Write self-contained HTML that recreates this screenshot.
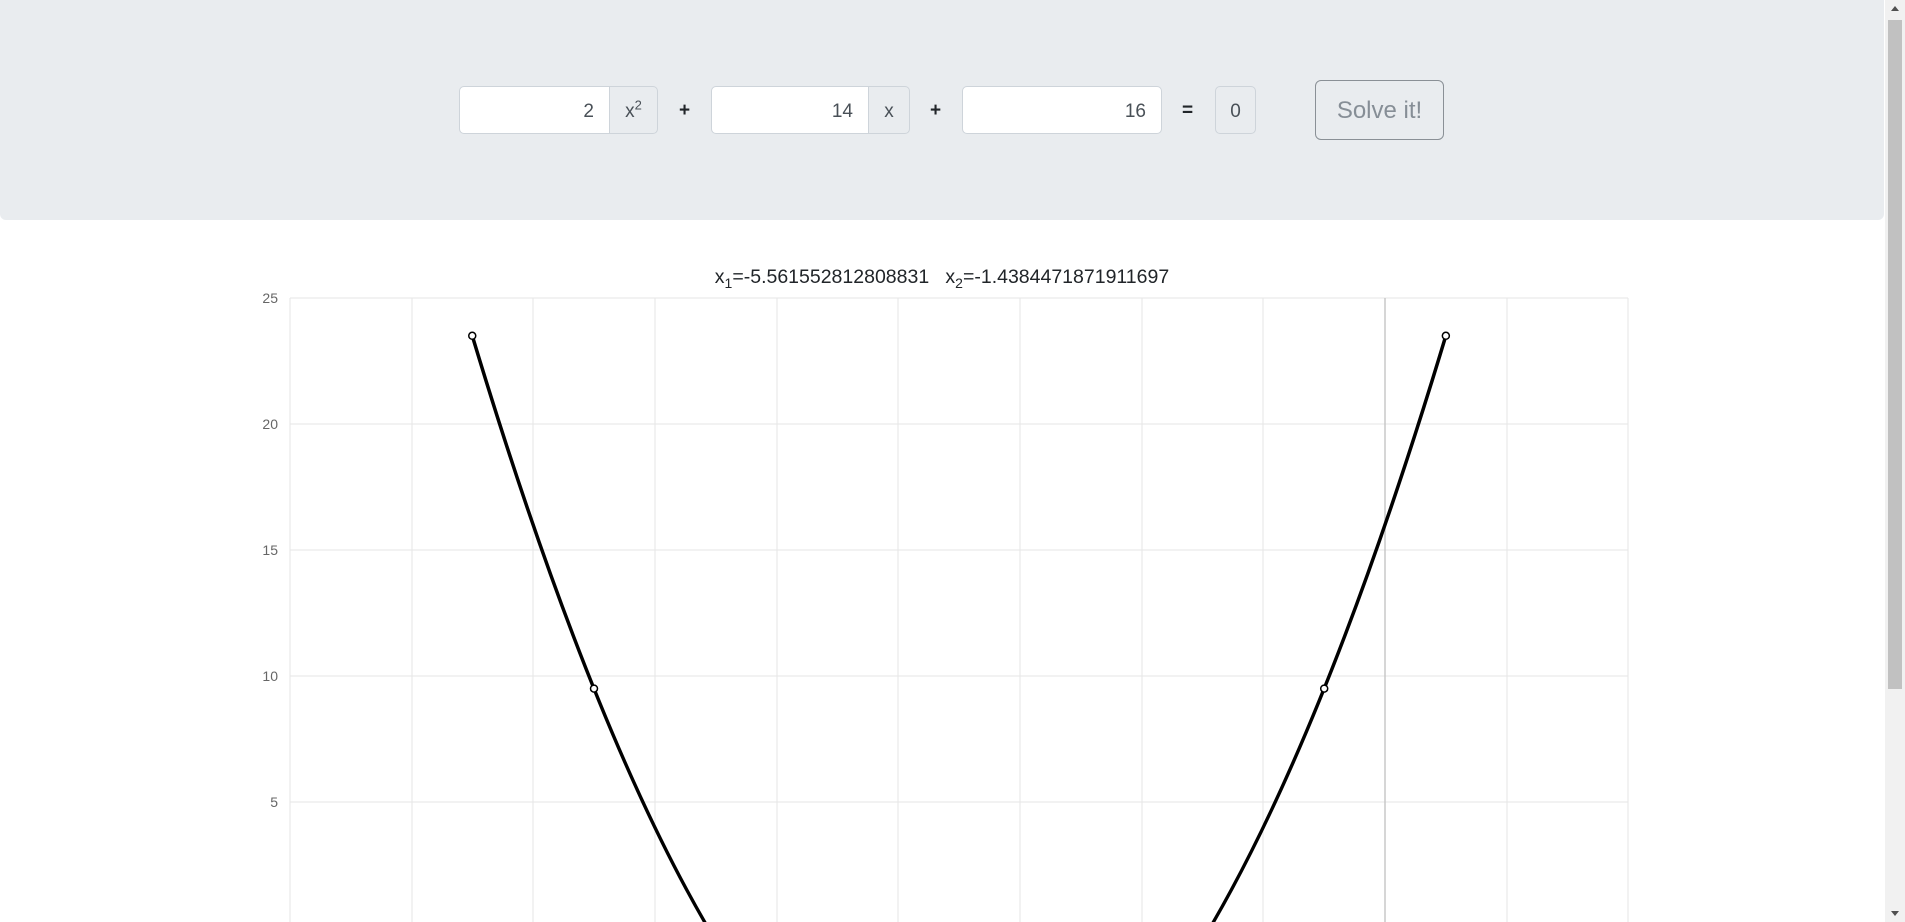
<!DOCTYPE html>
<html style="overflow:hidden"><head><meta charset="utf-8"><style>
*{box-sizing:border-box}
html,body{margin:0;width:1905px;height:922px;overflow:hidden}
body{background:#fff;font-family:"Liberation Sans",sans-serif;position:relative}
.hdr{position:absolute;left:0;top:0;width:1884px;height:220px;background:#e9ecef;border-radius:0 0 6px 6px}
.inp{position:absolute;top:86px;height:48px;background:#fff;border:1px solid #ced4da;border-radius:5px 0 0 5px;text-align:right;padding-right:15px;line-height:50px;font-size:19px;color:#495057}
.add{position:absolute;top:86px;height:48px;background:#e9ecef;border:1px solid #ced4da;border-radius:0 5px 5px 0;text-align:center;line-height:50px;font-size:19px;color:#495057}
.op{position:absolute;top:86px;line-height:50px;font-size:19px;font-weight:bold;color:#212529}
.btn{position:absolute;left:1315px;top:80px;width:129px;height:60px;border:1px solid #8a9096;border-radius:6px;color:#868e96;font-size:24px;line-height:60px;text-align:center}
.roots{position:absolute;left:0;width:1884px;top:266px;text-align:center;font-size:19.5px;color:#212529;white-space:nowrap}
.yl{position:absolute;left:230px;width:48px;text-align:right;font-size:14px;color:#666}
.sb{position:absolute;left:1885px;top:0;width:20px;height:922px;background:#f1f1f1;overflow:hidden}
.th{position:absolute;left:1888px;top:20px;width:14px;height:669px;background:#c1c1c1}
sub,sup{line-height:0}
</style></head><body>
<div class="hdr"></div>
<div class="inp" style="left:459px;width:151px">2</div>
<div class="add" style="left:609px;width:49px">x<sup style="font-size:13px">2</sup></div>
<div class="op" style="left:679px">+</div>
<div class="inp" style="left:711px;width:158px">14</div>
<div class="add" style="left:868px;width:42px">x</div>
<div class="op" style="left:930px">+</div>
<div class="inp" style="left:962px;width:200px;border-radius:5px">16</div>
<div class="op" style="left:1182px">=</div>
<div class="add" style="left:1215px;width:41px;border-radius:5px">0</div>
<div class="btn">Solve it!</div>
<div class="roots">x<sub style="font-size:14px">1</sub>=-5.561552812808831 &nbsp; x<sub style="font-size:14px">2</sub>=-1.4384471871911697</div>
<svg style="position:absolute;left:0;top:0" width="1905" height="922">
<g stroke="#e5e5e5" stroke-width="1">
<line x1="290" y1="298" x2="1628" y2="298"/><line x1="290" y1="424" x2="1628" y2="424"/><line x1="290" y1="550" x2="1628" y2="550"/><line x1="290" y1="676" x2="1628" y2="676"/><line x1="290" y1="802" x2="1628" y2="802"/>
<line x1="290" y1="298" x2="290" y2="922"/><line x1="412" y1="298" x2="412" y2="922"/><line x1="533" y1="298" x2="533" y2="922"/><line x1="655" y1="298" x2="655" y2="922"/><line x1="777" y1="298" x2="777" y2="922"/><line x1="898" y1="298" x2="898" y2="922"/><line x1="1020" y1="298" x2="1020" y2="922"/><line x1="1142" y1="298" x2="1142" y2="922"/><line x1="1263" y1="298" x2="1263" y2="922"/><line x1="1507" y1="298" x2="1507" y2="922"/><line x1="1628" y1="298" x2="1628" y2="922"/>
</g>
<line x1="1385" y1="298" x2="1385" y2="922" stroke="#c8c8c8" stroke-width="1.5"/>
<path d="M472.25 335.8 Q959.05 1948.6 1445.85 335.8" fill="none" stroke="#000" stroke-width="3.5"/>
<g fill="#fff" stroke="#000" stroke-width="1.5">
<circle cx="472.25" cy="335.8" r="3.5"/><circle cx="594" cy="688.6" r="3.5"/><circle cx="1324.2" cy="688.6" r="3.5"/><circle cx="1445.85" cy="335.8" r="3.5"/>
</g>
</svg>
<div class="yl" style="top:290px">25</div>
<div class="yl" style="top:416px">20</div>
<div class="yl" style="top:542px">15</div>
<div class="yl" style="top:668px">10</div>
<div class="yl" style="top:794px">5</div>
<div class="sb"><div style="position:absolute;left:6px;top:6px;border:4px solid transparent;border-bottom:5px solid #505050;border-top:0"></div><div style="position:absolute;left:6px;bottom:6px;border:4px solid transparent;border-top:5px solid #505050;border-bottom:0"></div></div>
<div class="th"></div>
</body></html>
